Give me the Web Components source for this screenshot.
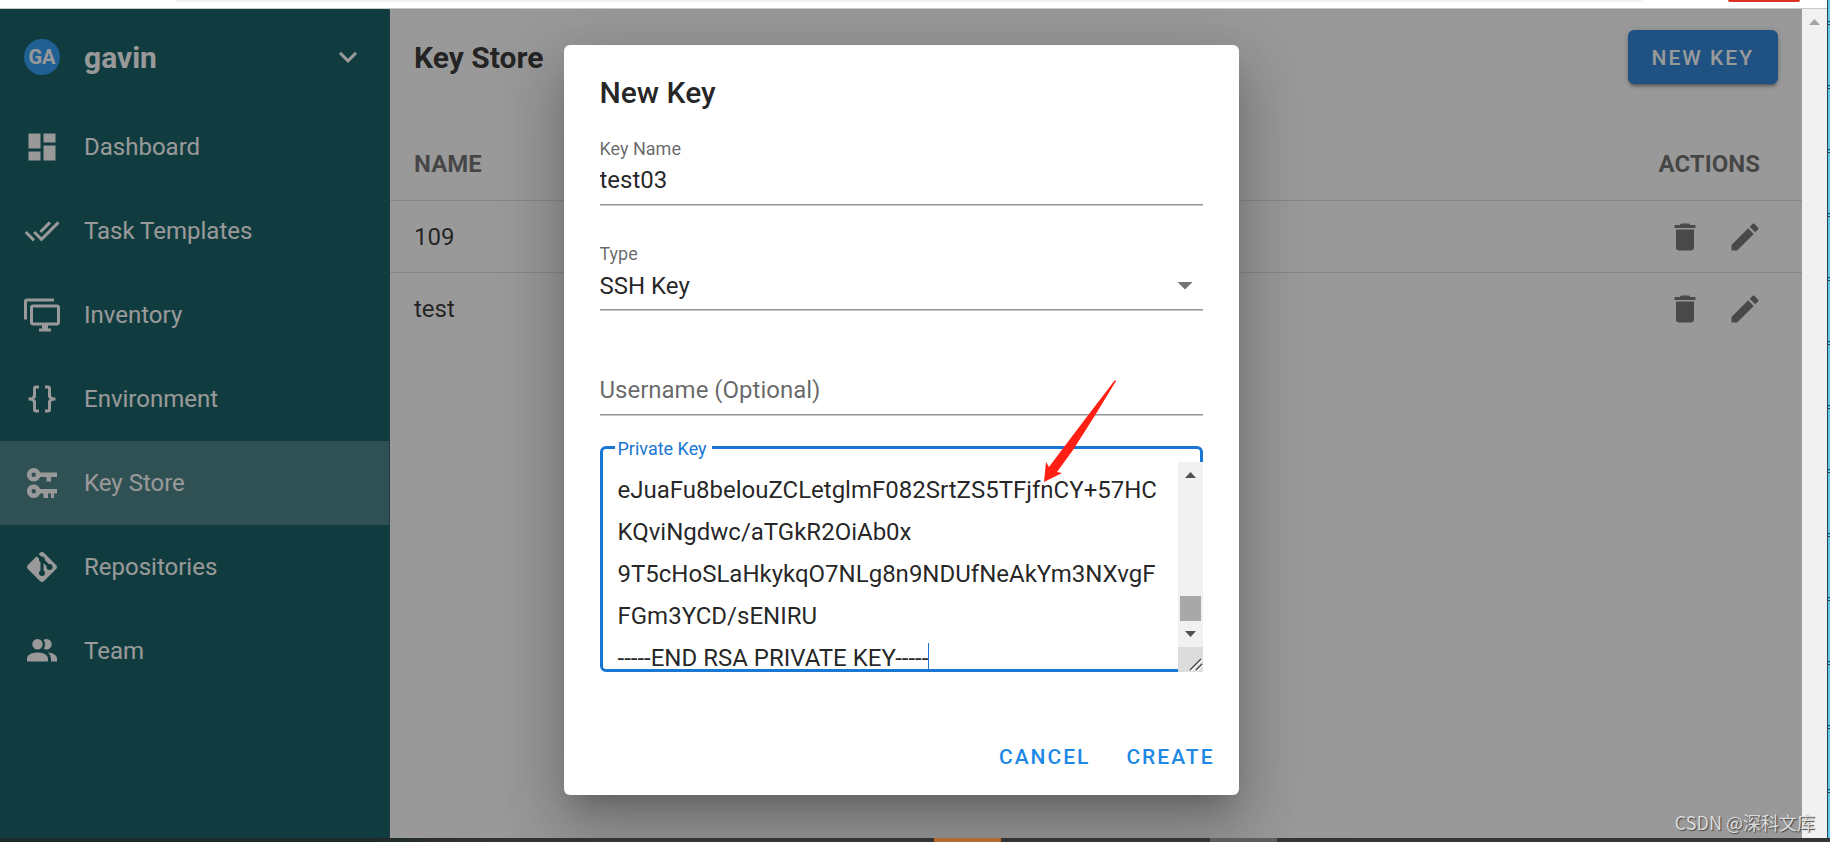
<!DOCTYPE html>
<html lang="en">
<head>
<meta charset="utf-8">
<title>Key Store</title>
<style>
html, body { margin: 0; height: 100%; }
body { font-family: Roboto, "Noto Sans CJK SC", sans-serif; font-size: 24px; color: rgba(0,0,0,.87); overflow: hidden; }
</style>
</head>
<body>
<app-window></app-window>
<script>
const ICONS = {
  dashboard: 'M13,3V9H21V3M13,21H21V11H13M3,21H11V15H3M3,13H11V3H3V13Z',
  checkAll: 'M0.41,13.41L6,19L7.41,17.58L1.83,12M22.24,5.58L11.66,16.17L7.5,12L6.07,13.41L11.66,19L23.66,7M18,7L16.59,5.58L10.24,11.93L11.66,13.34L18,7Z',
  monitors: 'M22,17V7H6V17H22M22,5A2,2 0 0,1 24,7V17C24,18.11 23.1,19 22,19H16V21H18V23H10V21H12V19H6C4.89,19 4,18.11 4,17V7A2,2 0 0,1 6,5H22M2,3V15H0V3A2,2 0 0,1 2,1H20V3H2Z',
  braces: 'M8,3A2,2 0 0,0 6,5V9A2,2 0 0,1 4,11H3V13H4A2,2 0 0,1 6,15V19A2,2 0 0,0 8,21H10V19H8V14A2,2 0 0,0 6,12A2,2 0 0,0 8,10V5H10V3M16,3A2,2 0 0,1 18,5V9A2,2 0 0,0 20,11H21V13H20A2,2 0 0,0 18,15V19A2,2 0 0,1 16,21H14V19H16V14A2,2 0 0,1 18,12A2,2 0 0,1 16,10V5H14V3H16Z',
  keys: 'M6.5,2C8.46,2 10.13,3.25 10.74,5H22V8H18V11H15V8H10.74C10.13,9.75 8.46,11 6.5,11C4,11 2,9 2,6.5C2,4 4,2 6.5,2M6.5,5A1.5,1.5 0 0,0 5,6.5A1.5,1.5 0 0,0 6.5,8A1.5,1.5 0 0,0 8,6.5A1.5,1.5 0 0,0 6.5,5M6.5,13C8.46,13 10.13,14.25 10.74,16H22V19H20V22H18V19H16V22H13V19H10.74C10.13,20.75 8.46,22 6.5,22C4,22 2,20 2,17.5C2,15 4,13 6.5,13M6.5,16A1.5,1.5 0 0,0 5,17.5A1.5,1.5 0 0,0 6.5,19A1.5,1.5 0 0,0 8,17.5A1.5,1.5 0 0,0 6.5,16Z',
  git: 'M2.6,10.59L8.38,4.8L10.07,6.5C9.83,7.35 10.22,8.28 11,8.73V14.27C10.4,14.61 10,15.26 10,16A2,2 0 0,0 12,18A2,2 0 0,0 14,16C14,15.26 13.6,14.61 13,14.27V9.41L15.07,11.5C15,11.65 15,11.82 15,12A2,2 0 0,0 17,14A2,2 0 0,0 19,12A2,2 0 0,0 17,10C16.82,10 16.65,10 16.5,10.07L13.93,7.5C14.19,6.57 13.71,5.55 12.78,5.16C12.35,5 11.9,4.96 11.5,5.07L9.8,3.38L10.59,2.6C11.37,1.81 12.63,1.81 13.41,2.6L21.4,10.59C22.19,11.37 22.19,12.63 21.4,13.41L13.41,21.4C12.63,22.19 11.37,22.19 10.59,21.4L2.6,13.41C1.81,12.63 1.81,11.37 2.6,10.59Z',
  team: 'M16 17V19H2V17S2 13 9 13 16 17 16 17M12.5 7.5A3.5 3.5 0 1 0 9 11A3.5 3.5 0 0 0 12.5 7.5M15.94 13A5.32 5.32 0 0 1 18 17V19H22V17S22 13.37 15.94 13M15 4A3.39 3.39 0 0 0 13.07 4.59A5 5 0 0 1 13.07 10.41A3.39 3.39 0 0 0 15 11A3.5 3.5 0 0 0 15 4Z',
  trash: 'M19,4H15.5L14.5,3H9.5L8.5,4H5V6H19M6,19A2,2 0 0,0 8,21H16A2,2 0 0,0 18,19V7H6V19Z',
  pencil: 'M20.71,7.04C21.1,6.65 21.1,6 20.71,5.63L18.37,3.29C18,2.9 17.35,2.9 16.96,3.29L15.12,5.12L18.87,8.87M3,17.25V21H6.75L17.81,9.93L14.06,6.18L3,17.25Z',
  chevron: 'M7.41,8.58L12,13.17L16.59,8.58L18,10L12,16L6,10L7.41,8.58Z',
  menuDown: 'M7,10L12,15L17,10H7Z'
};

function define(name, html, setup) {
  customElements.define(name, class extends HTMLElement {
    constructor() {
      super();
      const root = this.attachShadow({ mode: 'open' });
      const t = document.createElement('template');
      t.innerHTML = html;
      root.append(t.content.cloneNode(true));
    }
    connectedCallback() { if (setup) setup(this, this.shadowRoot); }
  });
}

define('md-icon', `
<style>
:host { display: block; width: 36px; height: 36px; flex: none; }
svg { display: block; width: 100%; height: 100%; fill: currentColor; }
</style>
<svg viewBox="0 0 24 24" aria-hidden="true"><path></path></svg>`,
  (el, root) => root.querySelector('path').setAttribute('d', ICONS[el.getAttribute('name')] || ''));

define('nav-item', `
<style>
:host { display: block; }
a { display: flex; align-items: center; gap: 24px; height: 84px; padding: 0 24px; color: #fff; text-decoration: none; }
:host([active]) a { background: rgba(255,255,255,.23); }
</style>
<a href="#"><md-icon></md-icon><slot></slot></a>`,
  (el, root) => {
    root.querySelector('md-icon').setAttribute('name', el.getAttribute('icon'));
    root.querySelector('md-icon').connectedCallback();
    if (el.hasAttribute('active')) root.querySelector('a').setAttribute('aria-current', 'page');
  });

define('app-sidebar', `
<style>
:host { display: block; width: 390px; flex: none; box-sizing: border-box; background: #035359; color: #fff; border-right: 1px solid #254f5c; }
.user { all: unset; box-sizing: border-box; width: 100%; display: flex; align-items: center; gap: 24px; height: 96px; padding: 0 23px 0 24px; cursor: pointer; }
.avatar { width: 36px; height: 36px; border-radius: 50%; background: #2196f3; display: grid; place-items: center; font-size: 20px; font-weight: 700; }
.name { flex: 1; font-size: 30px; font-weight: 700; }
</style>
<button class="user" type="button"><span class="avatar">GA</span><span class="name">gavin</span><md-icon name="chevron"></md-icon></button>
<nav>
<nav-item icon="dashboard">Dashboard</nav-item>
<nav-item icon="checkAll">Task Templates</nav-item>
<nav-item icon="monitors">Inventory</nav-item>
<nav-item icon="braces">Environment</nav-item>
<nav-item icon="keys" active>Key Store</nav-item>
<nav-item icon="git">Repositories</nav-item>
<nav-item icon="team">Team</nav-item>
</nav>`);

define('app-button', `
<style>
:host { display: block; }
button { display: block; box-sizing: border-box; height: 54px; border: 0; border-radius: 6px; padding: 2px 12px 0; background: transparent; color: #1e88e5; font: 500 21px Roboto, sans-serif; letter-spacing: 2px; text-transform: uppercase; cursor: pointer; }
:host([filled]) button { padding: 2px 24px 0; background: #1f7cd6; color: #fff; box-shadow: 0 4px 2px -3px rgba(0,0,0,.3), 0 3px 3px rgba(0,0,0,.2), 0 1px 7px rgba(0,0,0,.18); }
</style>
<button type="button"><slot></slot></button>`);

define('key-table', `
<style>
:host { display: block; }
table { width: 100%; border-collapse: separate; border-spacing: 0; }
th { box-sizing: border-box; height: 72px; padding: 0 24px 2px; text-align: left; font-weight: 700; color: rgba(0,0,0,.6); }
th:last-child { text-align: right; padding-right: 42px; }
td { box-sizing: border-box; height: 72px; padding: 0 24px; }
td:last-child { padding-right: 27px; }
th, tr:not(:last-child) td { border-bottom: 1px solid rgba(0,0,0,.12); }
.actions { display: flex; justify-content: flex-end; }
.actions button { display: block; border: 0; padding: 0 12px; background: none; color: rgba(0,0,0,.58); cursor: pointer; }
</style>
<table>
<thead><tr><th scope="col">NAME</th><th scope="col">ACTIONS</th></tr></thead>
<tbody></tbody>
</table>`,
  (el, root) => {
    root.querySelector('tbody').innerHTML = el.getAttribute('keys').split(',').map(k => `
<tr><td>${k}</td><td><div class="actions">
<button type="button" aria-label="Delete ${k}"><md-icon name="trash"></md-icon></button>
<button type="button" aria-label="Edit ${k}"><md-icon name="pencil"></md-icon></button>
</div></td></tr>`).join('');
  });

define('key-store-view', `
<style>
:host { display: block; flex: 1; min-width: 0; background: #fff; }
header { display: flex; align-items: center; justify-content: space-between; height: 96px; padding: 0 24px; }
h1 { margin: 0; font-size: 30px; font-weight: 700; }
key-table { margin-top: 24px; }
</style>
<header><h1>Key Store</h1><app-button filled>New Key</app-button></header>
<key-table keys="109,test"></key-table>`);

define('text-field', `
<style>
:host { display: block; padding-top: 24px; position: relative; }
label { position: absolute; top: 0; left: 0; font-size: 18px; line-height: 26px; color: rgba(0,0,0,.6); }
:host([floating]) label { top: 28px; font-size: 24px; line-height: 32px; pointer-events: none; }
input, select { display: block; box-sizing: border-box; width: 100%; height: 45px; margin: 0; border: 0; border-bottom: 1px solid #949494; box-shadow: 0 1px #c8c8c8; border-radius: 0; padding: 0 0 4px; background: transparent; color: rgba(0,0,0,.87); font: 24px Roboto, sans-serif; appearance: none; outline: 0; }
select { padding-bottom: 2px; }
md-icon { position: absolute; right: 0; top: 26px; color: rgba(0,0,0,.54); pointer-events: none; }
</style>
<label for="control"></label>`,
  (el, root) => {
    const value = el.getAttribute('value') || '';
    root.querySelector('label').textContent = el.getAttribute('label');
    root.querySelector('label').insertAdjacentHTML('afterend', el.hasAttribute('select')
      ? `<select id="control"><option>${value}</option></select><md-icon name="menuDown"></md-icon>`
      : `<input id="control" type="text" value="${value}">`);
  });

define('scroll-bar', `
<style>
:host { display: flex; flex-direction: column; align-items: center; box-sizing: border-box; width: 25px; background: #f1f1f1; padding: 10px 0; }
svg { display: block; flex: none; width: 11px; height: 6px; fill: #505050; }
.space { flex: 1; }
.thumb { width: 21px; height: 25px; background: #a8a8a8; margin-bottom: 10px; }
:host([disabled]) svg { fill: #a3a3a3; }
:host([disabled]) .thumb, :host([disabled]) .down { display: none; }
</style>
<svg viewBox="0 0 11 6"><path d="M0 6L5.5 0L11 6Z"/></svg>
<div class="space"></div><div class="thumb"></div>
<svg class="down" viewBox="0 0 11 6"><path d="M0 0L5.5 6L11 0Z"/></svg>`);

define('key-area', `
<style>
:host { display: block; position: relative; }
fieldset { margin: 0; min-width: 0; border: 3px solid #1976d2; border-radius: 6px; padding: 0 0 0 12px; }
legend { padding: 3px 5px 0 3px; font-size: 18px; line-height: 20px; color: #1976d2; }
textarea { display: block; box-sizing: border-box; width: 100%; height: 210px; margin: 0; border: 0; padding: 10px 25px 0 3px; background: transparent; color: rgba(0,0,0,.87); font: 24px/42px Roboto, sans-serif; white-space: pre; overflow: hidden; resize: none; outline: 0; }
.bar { position: absolute; right: 0; bottom: 0; display: flex; flex-direction: column; height: 210px; }
scroll-bar { flex: 1; }
.grip { display: block; width: 25px; height: 25px; background: #dcdcdc; }
.caret { position: absolute; left: 328px; bottom: 3px; width: 1px; height: 26px; background: #1976d2; }
</style>
<fieldset><legend><label for="key">Private Key</label></legend>
<textarea id="key" spellcheck="false"></textarea></fieldset>
<span class="caret"></span>
<div class="bar"><scroll-bar></scroll-bar>
<svg class="grip" viewBox="0 0 25 25"><path d="M12 23L23 12M18 23L24 17" stroke="#fff" stroke-width="1.5" transform="translate(1 1)"/><path d="M12 23L23 12M18 23L24 17" stroke="#444" stroke-width="1.4"/></svg></div>`,
  (el, root) => { root.querySelector('textarea').value = el.textContent.trim(); });

define('key-dialog', `
<style>
:host { display: block; position: relative; box-sizing: border-box; width: 675px; max-width: 100%; background: #fff; border-radius: 6px; padding: 24px 12px 12px;
  box-shadow: 0 17px 23px -11px rgba(0,0,0,.2), 0 36px 57px 5px rgba(0,0,0,.14), 0 14px 69px 12px rgba(0,0,0,.12); }
h2 { margin: 0 0 19px; font-size: 30px; line-height: 48px; font-weight: 500; }
.body { padding: 0 24px; }
text-field { margin-bottom: 36px; }
text-field:last-of-type { margin-bottom: 21px; }
footer { display: flex; justify-content: flex-end; gap: 12px; margin-top: 57px; }
.arrow { position: absolute; left: 479px; top: 334px; width: 74px; height: 105px; overflow: visible; fill: #ff1f13; }
</style>
<div class="body">
<h2>New Key</h2>
<text-field label="Key Name" value="test03"></text-field>
<text-field label="Type" value="SSH Key" select></text-field>
<text-field label="Username (Optional)" floating></text-field>
<key-area>eJuaFu8belouZCLetglmF082SrtZS5TFjfnCY+57HC
KQviNgdwc/aTGkR2OiAb0x
9T5cHoSLaHkykqO7NLg8n9NDUfNeAkYm3NXvgF
FGm3YCD/sENIRU
-----END RSA PRIVATE KEY-----</key-area>
</div>
<footer><app-button>Cancel</app-button><app-button>Create</app-button></footer>
<svg class="arrow" viewBox="0 0 74 105" aria-hidden="true"><path d="M72 1L73 2L51 38L30 71L14 93L19 94L1 103L3 83L6 88L21 68L46 35Z"/></svg>`);

define('app-window', `
<style>
:host { display: flex; height: 100%; min-height: 600px; flex-direction: column; position: relative; background: #fff; }
.top { flex: 1; min-height: 0; display: flex; }
.browser { flex: 1; min-width: 0; display: flex; flex-direction: column; }
.chrome { display: flex; height: 8px; border-bottom: 1px solid #c8c8c8; }
.chrome i { height: 2px; border-radius: 0 0 12px 12px; }
.address { flex: 1; margin: 0 86px 0 175px; background: #f1f3f4; }
.update { width: 72px; margin-right: 27px; background: #d93025; }
.view { flex: 1; min-height: 0; display: flex; }
.page { flex: 1; min-width: 0; display: grid; overflow: hidden; }
.page > * { grid-area: 1 / 1; }
.app { display: flex; }
.scrim { z-index: 1; display: flex; justify-content: center; align-items: flex-start; padding: 36px 0; background: rgba(33,33,33,.46); min-height: 0; }
.behind { width: 2px; border-left: 1px solid #26454e; background: linear-gradient(#26454e 1px, transparent 1px 3px, #26454e 3px 4px, transparent 4px) 0 21px / 2px 64px repeat-y, #5fc8ec; }
.taskbar { display: flex; height: 4px; background: linear-gradient(90deg, #1c2a2c, #1f2a2b 20%, #333 27%, #353535); }
.taskbar i { width: 67px; }
.taskbar .orange { margin-left: 51.04%; background: #b56a2f; }
.taskbar .grey { margin-left: 209px; background: #5d5d5d; }
.mark { position: absolute; z-index: 2; right: 15px; bottom: 7px; font: 18px/26px "Noto Sans CJK SC", sans-serif; color: #dcdcdc; text-shadow: 1px 1px 1px #444; }
</style>
<div class="top">
<div class="browser">
<div class="chrome"><i class="address"></i><i class="update"></i></div>
<div class="view">
<div class="page">
<div class="app"><app-sidebar></app-sidebar><key-store-view></key-store-view></div>
<div class="scrim"><key-dialog role="dialog" aria-label="New Key"></key-dialog></div>
</div>
<scroll-bar disabled></scroll-bar>
</div>
</div>
<div class="behind"></div>
</div>
<div class="taskbar"><i class="orange"></i><i class="grey"></i></div>
<div class="mark">CSDN @深科文库</div>`);
</script>
</body>
</html>
